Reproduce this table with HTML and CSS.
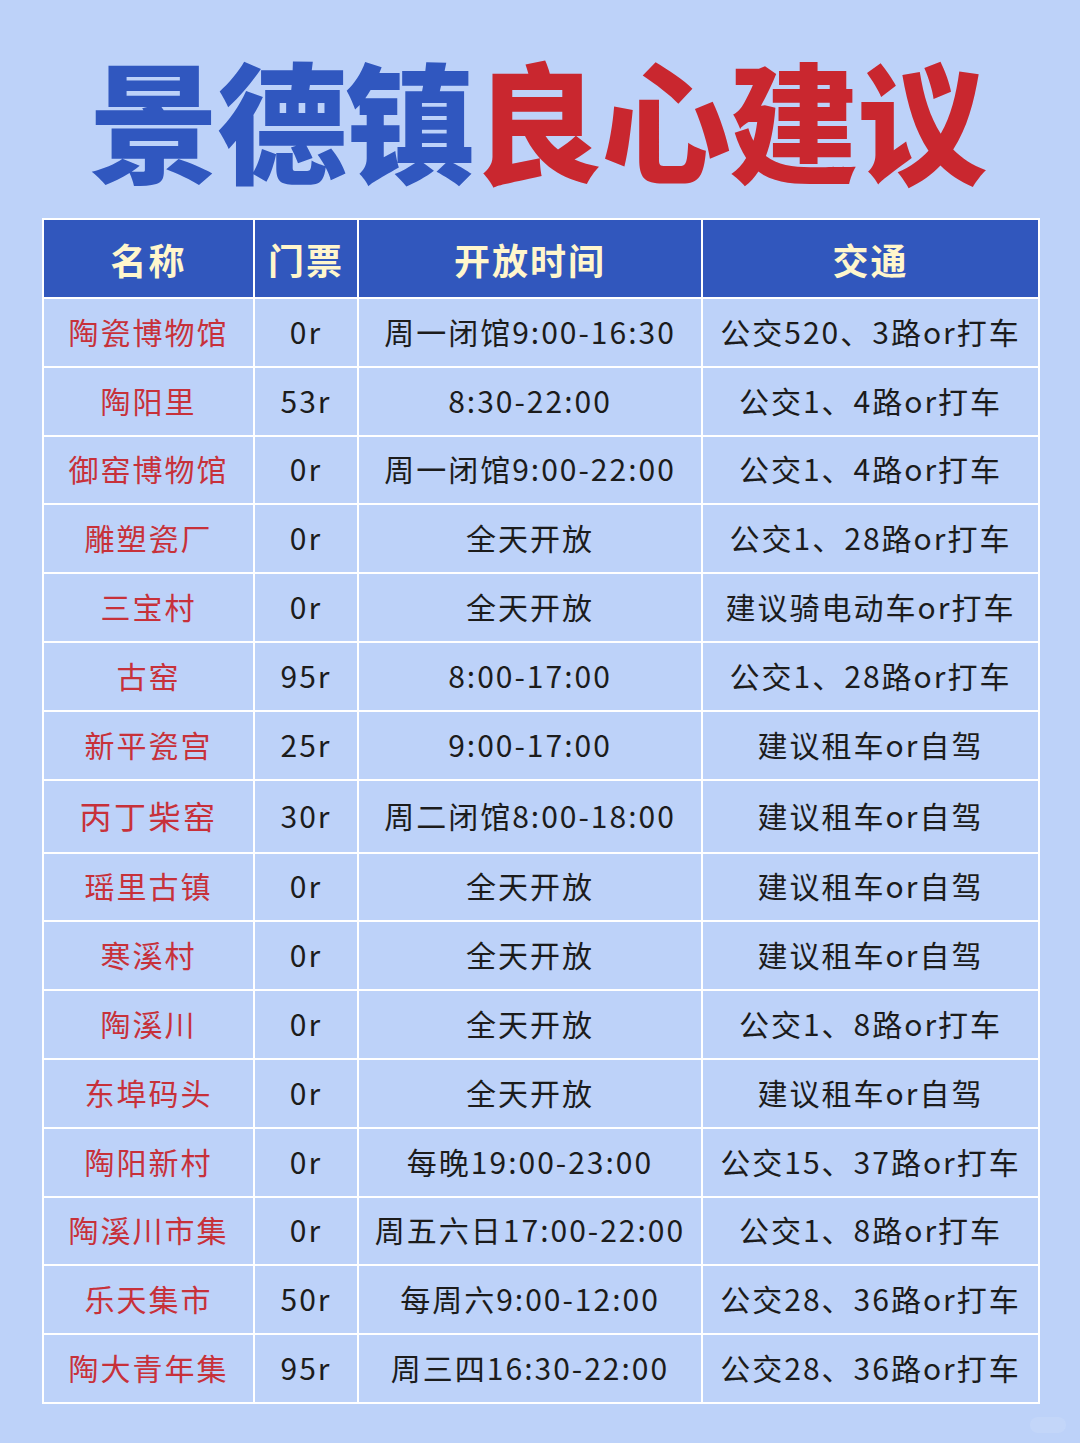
FILE: index.html
```html
<!DOCTYPE html>
<html lang="zh-CN">
<head>
<meta charset="utf-8">
<title>景德镇良心建议</title>
<link rel="stylesheet" href="styles.css">
</head>
<body>
<div class="page">
  <h1 class="title"><span class="blue">景德镇</span><span class="red">良心建议</span></h1>
  <table class="guide">
    <colgroup>
      <col class="c-name"><col class="c-ticket"><col class="c-time"><col class="c-traffic">
    </colgroup>
    <thead>
      <tr><th>名称</th><th>门票</th><th>开放时间</th><th>交通</th></tr>
    </thead>
    <tbody>
      <tr><td class="name">陶瓷博物馆</td><td>0r</td><td>周一闭馆9:00-16:30</td><td>公交520、3路or打车</td></tr>
      <tr><td class="name">陶阳里</td><td>53r</td><td>8:30-22:00</td><td>公交1、4路or打车</td></tr>
      <tr><td class="name">御窑博物馆</td><td>0r</td><td>周一闭馆9:00-22:00</td><td>公交1、4路or打车</td></tr>
      <tr><td class="name">雕塑瓷厂</td><td>0r</td><td>全天开放</td><td>公交1、28路or打车</td></tr>
      <tr><td class="name">三宝村</td><td>0r</td><td>全天开放</td><td>建议骑电动车or打车</td></tr>
      <tr><td class="name">古窑</td><td>95r</td><td>8:00-17:00</td><td>公交1、28路or打车</td></tr>
      <tr><td class="name">新平瓷宫</td><td>25r</td><td>9:00-17:00</td><td>建议租车or自驾</td></tr>
      <tr class="tall"><td class="name big">丙丁柴窑</td><td>30r</td><td>周二闭馆8:00-18:00</td><td>建议租车or自驾</td></tr>
      <tr><td class="name">瑶里古镇</td><td>0r</td><td>全天开放</td><td>建议租车or自驾</td></tr>
      <tr><td class="name">寒溪村</td><td>0r</td><td>全天开放</td><td>建议租车or自驾</td></tr>
      <tr><td class="name">陶溪川</td><td>0r</td><td>全天开放</td><td>公交1、8路or打车</td></tr>
      <tr><td class="name">东埠码头</td><td>0r</td><td>全天开放</td><td>建议租车or自驾</td></tr>
      <tr><td class="name">陶阳新村</td><td>0r</td><td>每晚19:00-23:00</td><td>公交15、37路or打车</td></tr>
      <tr><td class="name">陶溪川市集</td><td>0r</td><td>周五六日17:00-22:00</td><td>公交1、8路or打车</td></tr>
      <tr><td class="name">乐天集市</td><td>50r</td><td>每周六9:00-12:00</td><td>公交28、36路or打车</td></tr>
      <tr><td class="name">陶大青年集</td><td>95r</td><td>周三四16:30-22:00</td><td>公交28、36路or打车</td></tr>
    </tbody>
  </table>
  <div class="mark"></div>
</div>
</body>
</html>
```
FILE: styles.css
```css
html, body {
  margin: 0;
  padding: 0;
  background: #bdd2f9;
}
.page {
  width: 1080px;
  height: 1443px;
  position: relative;
  background: #bdd2f9;
  font-family: "Noto Sans CJK SC", "Noto Sans", sans-serif;
}
.title {
  margin: 0;
  height: 218px;
  display: flex;
  align-items: center;
  justify-content: center;
  box-sizing: border-box;
  padding-top: 14px;
  padding-right: 6px;
  font-size: 130px;
  font-weight: 900;
  line-height: 1;
  letter-spacing: -2px;
}
.blue { color: #3057bf; }
.red { color: #c9272f; }
.guide {
  margin-left: 42px;
  width: 996px;
  border-collapse: collapse;
  table-layout: fixed;
  border: 2px solid #ffffff;
}
.c-name { width: 211px; }
.c-ticket { width: 104px; }
.c-time { width: 344px; }
.c-traffic { width: 337px; }
.guide th, .guide td {
  border: 2px solid #ffffff;
  padding: 0;
  text-align: center;
  vertical-align: middle;
  white-space: nowrap;
}
.guide th {
  height: 77px;
  background: #3157bd;
  color: #fff6cc;
  font-size: 36px;
  font-weight: 700;
  letter-spacing: 2px;
}
.guide td {
  height: 63.8px;
  padding-bottom: 3px;
  color: #1c1c1c;
  font-size: 30px;
  font-weight: 400;
  letter-spacing: 2px;
}
.guide tr.tall td { height: 68px; }
.guide td.name {
  color: #c7313a;
}
.guide td.big {
  font-size: 32px;
  letter-spacing: 2.5px;
}
.mark {
  position: absolute;
  right: 14px;
  bottom: 10px;
  width: 36px;
  height: 16px;
  border-radius: 8px;
  background: rgba(255, 255, 255, 0.1);
}
```
